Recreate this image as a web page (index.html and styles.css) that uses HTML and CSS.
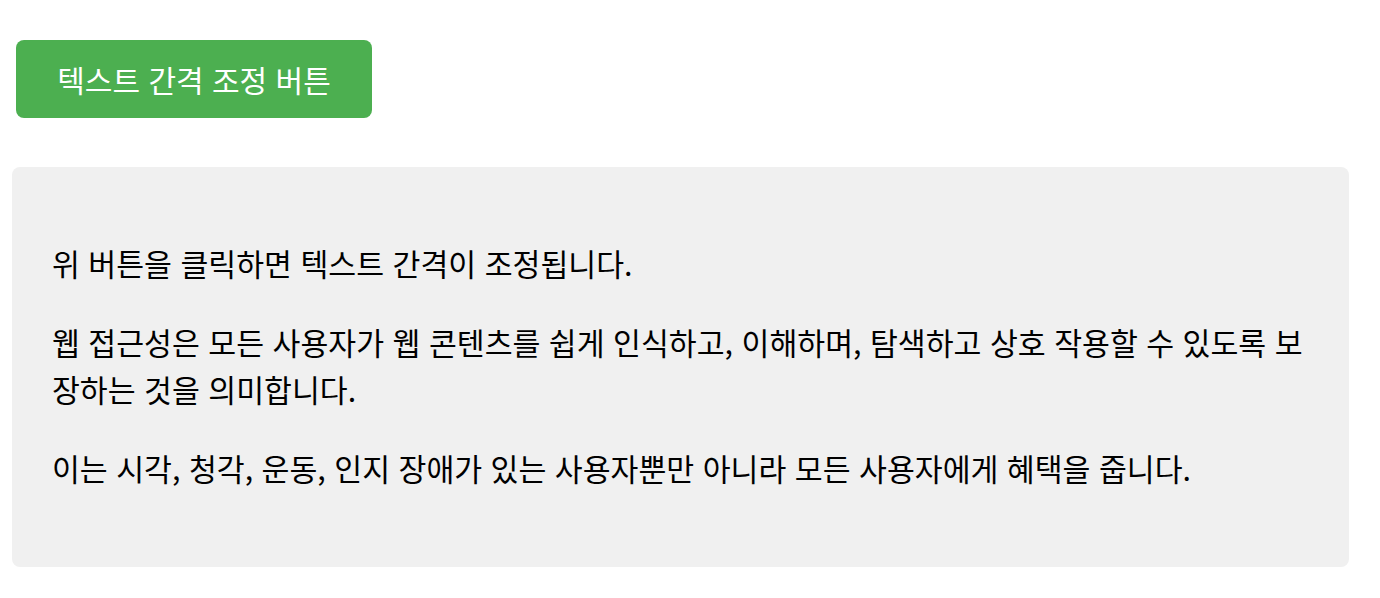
FILE: index.html
```html
<!DOCTYPE html>
<html lang="ko">
<head>
<meta charset="utf-8">
<title>텍스트 간격</title>
<link rel="stylesheet" href="styles.css">
</head>
<body>
<div class="page">
  <button class="spacing-btn" type="button">텍스트 간격 조정 버튼</button>
  <div class="content">
    <p>위 버튼을 클릭하면 텍스트 간격이 조정됩니다.</p>
    <p>웹 접근성은 모든 사용자가 웹 콘텐츠를 쉽게 인식하고, 이해하며, 탐색하고 상호 작용할 수 있도록 보장하는 것을 의미합니다.</p>
    <p>이는 시각, 청각, 운동, 인지 장애가 있는 사용자뿐만 아니라 모든 사용자에게 혜택을 줍니다.</p>
  </div>
</div>
</body>
</html>
```
FILE: styles.css
```css
html, body {
  margin: 0;
  padding: 0;
  background: #ffffff;
}
body {
  font-family: "Noto Sans CJK KR", "Noto Sans", sans-serif;
  color: #000;
}
.page {
  padding: 40px 31px 0 12px;
  display: flex;
  flex-direction: column;
  align-items: flex-start;
}
.spacing-btn {
  margin-left: 4px;
  width: 356px;
  height: 78px;
  background: #4caf50;
  color: #fff;
  border: none;
  border-radius: 8px;
  font-family: "Noto Sans CJK KR", sans-serif;
  font-size: 30px;
  padding: 0;
}
.content {
  margin-top: 49px;
  align-self: stretch;
  background: #f0f0f0;
  border-radius: 8px;
  padding: 41px 40px 43px;
  font-size: 30.3px;
  line-height: 47px;
}
.content p {
  margin: 32px 0;
}
```
